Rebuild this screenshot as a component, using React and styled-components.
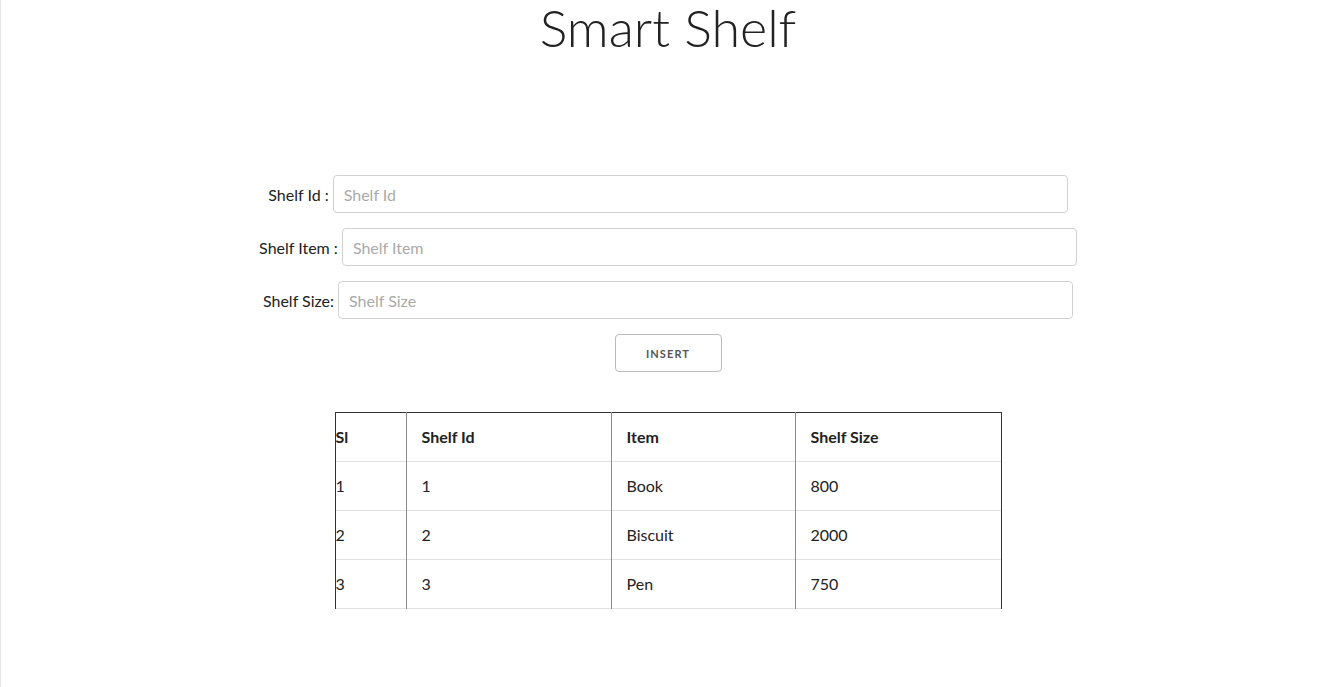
import React from "react"
import styled, { createGlobalStyle } from "styled-components"

const GlobalStyle = createGlobalStyle`
  body {
    margin: 0;
    background: #fff;
    font-family: "Lato", "Open Sans", sans-serif;
    color: #222;
  }
`

const Page = styled.div`
  min-height: 100vh;
  border-left: 1px solid #e6e6e6;
  box-sizing: border-box;
`

const Title = styled.h1`
  margin: 0;
  text-align: center;
  font-size: 52px;
  line-height: 54px;
  font-weight: 300;
  color: #222;
`

const Form = styled.form`
  margin-top: 121px;
  display: flex;
  flex-direction: column;
  align-items: center;
`

const Row = styled.div`
  display: flex;
  align-items: center;
  gap: 4px;
  margin-bottom: 15px;
`

const Label = styled.label`
  font-size: 16px;
  color: #222;
`

const Input = styled.input`
  width: 735px;
  height: 38px;
  box-sizing: border-box;
  border: 1px solid #d1d1d1;
  border-radius: 4px;
  padding: 0 10px;
  font-family: inherit;
  font-size: 16px;
  color: #222;
  outline: none;
  &::placeholder {
    color: #aaa;
  }
`

const Button = styled.button`
  width: 107px;
  height: 38px;
  background: transparent;
  border: 1px solid #bbb;
  border-radius: 4px;
  font-family: inherit;
  font-size: 11px;
  font-weight: 700;
  letter-spacing: 1.1px;
  color: #555;
  cursor: pointer;
`

const Table = styled.table`
  margin: 40px auto 0;
  width: 666px;
  table-layout: fixed;
  border-collapse: collapse;
  font-size: 16px;
  color: #222;
`

const Tr = styled.tr`
  height: 49px;
  border-bottom: 1px solid #e1e1e1;
  &:first-child {
    border-top: 1px solid #333;
  }
`

const Cell = styled.td`
  width: ${(p) => p.$w}px;
  box-sizing: border-box;
  padding: 0 0 2px ${(p) => (p.$flush ? 0 : 15)}px;
  text-align: left;
  font-weight: ${(p) => (p.$head ? 700 : 400)};
  border-left: 1px solid #8a8a8a;
  &:first-child {
    border-left-color: #333;
  }
  &:last-child {
    border-right: 1px solid #333;
  }
`

const columns = [
  { key: "sl", label: "Sl", w: 71, flush: true },
  { key: "id", label: "Shelf Id", w: 205 },
  { key: "item", label: "Item", w: 184 },
  { key: "size", label: "Shelf Size", w: 206 },
]

const shelves = [
  { sl: 1, id: 1, item: "Book", size: 800 },
  { sl: 2, id: 2, item: "Biscuit", size: 2000 },
  { sl: 3, id: 3, item: "Pen", size: 750 },
]

export default function App() {
  return (
    <Page>
      <GlobalStyle />
      <Title>Smart Shelf</Title>
      <Form onSubmit={(e) => e.preventDefault()}>
        <Row>
          <Label>Shelf Id :</Label>
          <Input placeholder="Shelf Id" />
        </Row>
        <Row>
          <Label>Shelf Item :</Label>
          <Input placeholder="Shelf Item" />
        </Row>
        <Row>
          <Label>Shelf Size:</Label>
          <Input placeholder="Shelf Size" />
        </Row>
        <Button type="submit">INSERT</Button>
      </Form>
      <Table>
        <tbody>
          <Tr>
            {columns.map((c) => (
              <Cell key={c.key} as="th" $head $w={c.w} $flush={c.flush}>
                {c.label}
              </Cell>
            ))}
          </Tr>
          {shelves.map((s) => (
            <Tr key={s.sl}>
              {columns.map((c) => (
                <Cell key={c.key} $w={c.w} $flush={c.flush}>
                  {s[c.key]}
                </Cell>
              ))}
            </Tr>
          ))}
        </tbody>
      </Table>
    </Page>
  )
}
